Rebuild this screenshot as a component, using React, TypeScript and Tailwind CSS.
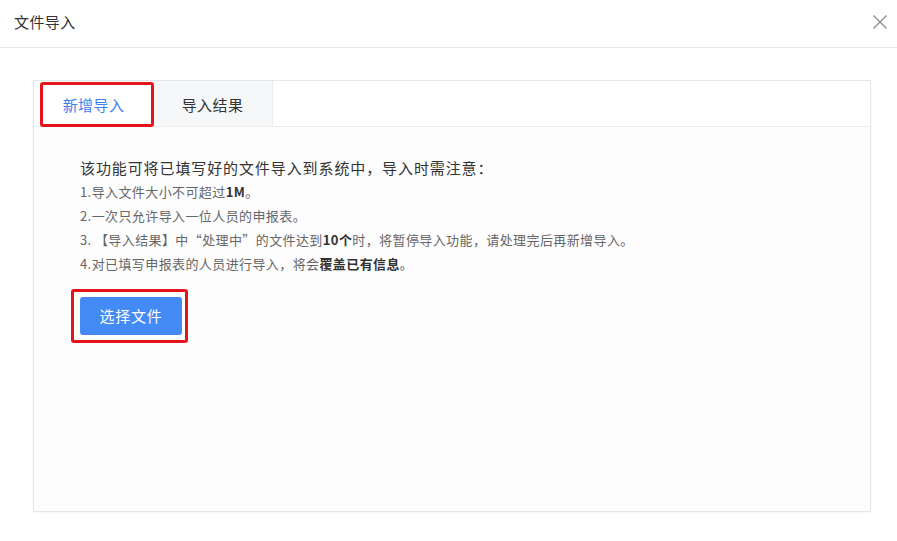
import React from 'react';

const notes = [
  { id: 1, parts: [{ t: '1.导入文件大小不可超过' }, { t: '1M', b: true }, { t: '。' }] },
  { id: 2, parts: [{ t: '2.一次只允许导入一位人员的申报表。' }] },
  {
    id: 3,
    parts: [
      { t: '3. 【导入结果】中“处理中”的文件达到' },
      { t: '10个', b: true },
      { t: '时，将暂停导入功能，请处理完后再新增导入。' },
    ],
  },
  {
    id: 4,
    parts: [{ t: '4.对已填写申报表的人员进行导入，将会' }, { t: '覆盖已有信息', b: true }, { t: '。' }],
  },
];

export default function App() {
  return (
    <div className="relative w-[897px] h-[541px] overflow-hidden bg-white font-['Noto_Sans_CJK_SC','Liberation_Sans',sans-serif]">
      {/* header */}
      <div className="flex h-[48px] items-center justify-between border-b border-[#e8e8e8] pl-[14px] pr-[10px] pb-[3px]">
        <span className="text-[15px] tracking-[0.4px] text-[#333]">文件导入</span>
        <svg width="14" height="14" viewBox="0 0 14 14" className="text-[#8c8c8c]">
          <path d="M0.5 0.5 L13.5 13.5 M13.5 0.5 L0.5 13.5" stroke="currentColor" strokeWidth="1.3" fill="none" />
        </svg>
      </div>

      {/* card */}
      <div className="ml-[33px] mt-[32px] h-[432px] w-[838px] border border-[#e6e6e6] bg-[#fdfdfe] shadow-[0_1px_2px_rgba(0,0,0,0.04)]">
        <div className="flex h-[46px] border-b border-[#ececec] bg-white">
          <div className="relative flex w-[119px] items-center justify-center bg-white pt-[3px] text-[15px] tracking-[0.4px] text-[#3f80ef]">
            新增导入
            <div className="absolute left-[6px] right-[-1px] top-[1px] bottom-[-1px] rounded-[3px] border-[3px] border-[#e5141c]" />
          </div>
          <div className="flex w-[120px] items-center justify-center border-r border-[#ececec] bg-[#f6f7f9] pt-[3px] text-[15px] tracking-[0.4px] text-[#333]">
            导入结果
          </div>
        </div>

        <div className="pl-[46px] pt-[29px]">
          <p className="text-[15px] leading-[24px] tracking-[0.9px] text-[#333]">
            该功能可将已填写好的文件导入到系统中，导入时需注意：
          </p>
          {notes.map((n) => (
            <p key={n.id} className="text-[13px] leading-[24px] tracking-[0.4px] text-[#666]">
              {n.parts.map((p, i) =>
                p.b ? (
                  <b key={i} className="font-bold text-[#333]">
                    {p.t}
                  </b>
                ) : (
                  <span key={i}>{p.t}</span>
                )
              )}
            </p>
          ))}

          <div className="relative mt-[21px] inline-block">
            <button className="h-[38px] w-[102px] rounded-[3px] bg-[#438af5] text-[15px] tracking-[0.8px] text-white">
              选择文件
            </button>
            <div className="absolute left-[-9px] right-[-6px] top-[-8px] bottom-[-8px] rounded-[3px] border-[3px] border-[#e5141c]" />
          </div>
        </div>
      </div>
    </div>
  );
}
